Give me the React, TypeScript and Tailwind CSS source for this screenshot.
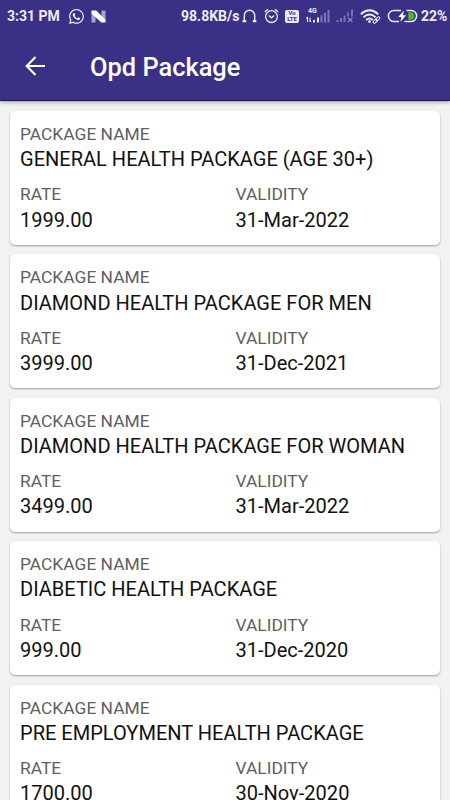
import { FaWhatsapp } from "react-icons/fa";

interface OpdPackage {
  name: string;
  rate: string;
  validity: string;
}

const packages: OpdPackage[] = [
  { name: "GENERAL HEALTH PACKAGE (AGE 30+)", rate: "1999.00", validity: "31-Mar-2022" },
  { name: "DIAMOND HEALTH PACKAGE FOR MEN", rate: "3999.00", validity: "31-Dec-2021" },
  { name: "DIAMOND HEALTH PACKAGE FOR WOMAN", rate: "3499.00", validity: "31-Mar-2022" },
  { name: "DIABETIC HEALTH PACKAGE", rate: "999.00", validity: "31-Dec-2020" },
  { name: "PRE EMPLOYMENT HEALTH PACKAGE", rate: "1700.00", validity: "30-Nov-2020" },
];

function NougatIcon() {
  return (
    <svg className="ml-[6px] shrink-0" width="15" height="13" viewBox="0 0 15 13">
      <path d="M0.5 2.5L4.5 6v6.5h-4z" fill="#a9a3d6" />
      <path d="M10.5 0.5h4v10l-4-3.5z" fill="#a9a3d6" />
      <path d="M0.5 0.5h4.7l9.3 9.2v2.8h-4.2L0.5 3.5z" fill="#fff" />
    </svg>
  );
}

function HeadphoneIcon() {
  return (
    <svg className="ml-[3px] shrink-0" width="15" height="15" viewBox="0 0 15 15" fill="none" stroke="currentColor">
      <path d="M2.3 11V6.5a5.2 5.3 0 0 1 10.4 0V11" strokeWidth="1.4" />
      <path d="M0.6 12.2h3.6M10.8 12.2h3.6" strokeWidth="2.2" />
    </svg>
  );
}

function AlarmIcon() {
  return (
    <svg className="ml-[7px] shrink-0" width="15" height="16" viewBox="0 0 15 16" fill="none" stroke="currentColor" strokeWidth="1.3">
      <circle cx="7.5" cy="8.6" r="5.9" />
      <path d="M0.8 4L4 1.2M14.2 4L11 1.2" />
      <path d="M4.8 7.6l2.7 2.2 2.7-2.2" />
    </svg>
  );
}

function VolteIcon() {
  return (
    <div className="ml-[6px] flex h-[13px] w-[14px] shrink-0 flex-col items-center justify-center rounded-[2px] bg-[#eeecfa] text-[6px] leading-[6px] font-bold text-[#3a3086]">
      <span>Vo</span>
      <span>LTE</span>
    </div>
  );
}

function DataSignal() {
  return (
    <div className="ml-[7px] flex h-[16px] w-[24px] shrink-0 flex-col">
      <span className="ml-[2px] text-[7px] leading-[6px] font-bold">4G</span>
      <svg className="-mt-[4px]" width="24" height="13" viewBox="0 0 24 13">
        <path d="M1.5 12V7M0.3 8.4L1.5 7M4 7.5v4.5M4 12l1-1.2" stroke="currentColor" strokeWidth="1.1" fill="none" />
        <path d="M7 10h2v2.5H7zM11 7.5h2v5h-2z" fill="currentColor" />
        <path d="M14.5 5.5h2v7h-2zM18 3h2v9.5h-2zM21.5 0h2v12.5h-2z" fill="#7f77b8" />
      </svg>
    </div>
  );
}

function EmptySignal() {
  return (
    <svg className="ml-[6px] shrink-0" width="18" height="14" viewBox="0 0 18 14">
      <path d="M0.5 11h2v2h-2zM4 9h2v4H4zM7.5 6.5h2V13h-2zM11 3.5h2v4h-2zM15 0.5h2v7h-2z" fill="#7970b3" />
      <path d="M12 8.8l4.5 4.2M16.5 8.8L12 13" stroke="#8f87c2" strokeWidth="1.2" />
    </svg>
  );
}

function WifiIcon() {
  return (
    <svg className="ml-[6px] shrink-0" width="21" height="15" viewBox="0 0 21 15" fill="none" stroke="currentColor">
      <path d="M0.8 5.2Q9.5-2.6 18.2 5.2" strokeWidth="1.9" />
      <path d="M3.5 8.2Q9.5 2.8 15.5 8.2" strokeWidth="1.9" />
      <path d="M6.2 11Q9.5 7.8 12.8 11" strokeWidth="1.9" />
      <circle cx="9.5" cy="12.6" r="1" fill="currentColor" />
      <rect x="-2.3" y="-1.3" width="4.6" height="2.6" rx="1.3" transform="translate(15.2 12.2) rotate(-45)" strokeWidth="1" />
      <rect x="-2.3" y="-1.3" width="4.6" height="2.6" rx="1.3" transform="translate(17.8 9.8) rotate(-45)" strokeWidth="1" />
    </svg>
  );
}

function BatteryIcon() {
  return (
    <svg className="ml-[6px] shrink-0" width="31" height="14" viewBox="0 0 31 14" fill="none">
      <path d="M14 1.4H7a5.6 5.6 0 0 0 0 11.2h5M19.5 1.4H24a5.6 5.6 0 0 1 0 11.2h-6.5" stroke="currentColor" strokeWidth="1.5" />
      <path d="M21.3 3.2h2.2a3.8 3.8 0 0 1 0 7.6h-2.2z" fill="#43c51d" />
      <path d="M17 1.5L11.2 8h3.3l-1.2 5L19.2 6.2h-3.4z" fill="#fff" />
    </svg>
  );
}

function StatusBar() {
  return (
    <div className="flex h-8 items-center pl-[7px] text-[14px] font-bold text-[#eeecfa]">
      <span className="w-[61px] whitespace-nowrap">3:31 PM</span>
      <FaWhatsapp className="shrink-0" size={17} />
      <NougatIcon />
      <span className="ml-[75px] w-[58px] whitespace-nowrap">98.8KB/s</span>
      <HeadphoneIcon />
      <AlarmIcon />
      <VolteIcon />
      <DataSignal />
      <EmptySignal />
      <WifiIcon />
      <BatteryIcon />
      <span className="ml-[3px] whitespace-nowrap">22%</span>
    </div>
  );
}

function Field({ label, value }: { label: string; value: string }) {
  return (
    <div className="w-[215.5px] shrink-0 whitespace-nowrap">
      <div className="text-[17.4px] leading-[23px] text-[#5f5f5f]">{label}</div>
      <div className="pt-[0.2px] text-[20.05px] leading-[27.4px] text-[#111]">{value}</div>
    </div>
  );
}

function PackageCard({ item }: { item: OpdPackage }) {
  return (
    <div className="h-[134px] shrink-0 rounded-[5px] bg-white px-[10px] pt-[12px] shadow-[0_1px_2px_rgba(0,0,0,0.35)]">
      <Field label="PACKAGE NAME" value={item.name} />
      <div className="mt-[9.8px] flex">
        <Field label="RATE" value={item.rate} />
        <Field label="VALIDITY" value={item.validity} />
      </div>
    </div>
  );
}

export default function App() {
  return (
    <div className="flex h-[800px] w-[450px] flex-col overflow-hidden bg-[#f1f2f2] font-[Roboto,sans-serif]">
      <header className="z-10 h-[101px] shrink-0 border-b border-[#20105f] bg-[#3a3086] shadow-[0_1px_4px_rgba(0,0,0,0.4)]">
        <StatusBar />
        <div className="flex h-[68px] items-center pl-[25px] text-white">
          <svg width="21" height="20" viewBox="0 0 21 20" fill="none" stroke="currentColor" strokeWidth="2.1">
            <path d="M20 10H2M10.5 1L1.7 10l8.8 9" />
          </svg>
          <h1 className="ml-[44px] pt-[2px] text-[25.4px] font-medium">Opd Package</h1>
        </div>
      </header>

      <main className="flex flex-col gap-[9.4px] px-[10px] pt-[10px]">
        {packages.map((item) => (
          <PackageCard key={item.name} item={item} />
        ))}
      </main>
    </div>
  );
}
